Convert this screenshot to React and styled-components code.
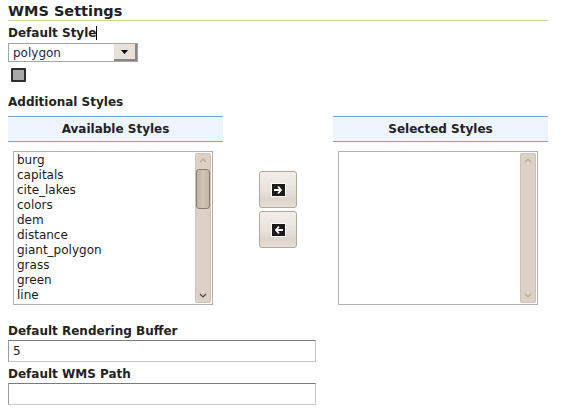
import styled, { createGlobalStyle } from "styled-components";

const GlobalStyle = createGlobalStyle`
  body {
    margin: 0;
    background: #fff;
    font-family: "DejaVu Sans", Verdana, sans-serif;
    color: #222;
  }
`;

const StyledPage = styled.div`
  width: 540px;
  padding: 2px 0 0 8px;
`;

const StyledTitle = styled.h2`
  margin: 0;
  font-size: 14.5px;
  font-weight: bold;
  line-height: 18px;
  border-bottom: 1px solid #bddc8a;
`;

const StyledLabel = styled.div`
  font-size: 12px;
  font-weight: bold;
  line-height: 15px;
  margin-top: ${(props) => props.$top || 0}px;
`;

const StyledCaret = styled.span`
  display: inline-block;
  width: 1px;
  height: 14px;
  background: #000;
  vertical-align: -3px;
`;

const StyledSelect = styled.div`
  margin-top: 2px;
  width: 128px;
  height: 17px;
  border: 1px solid #a5a5a5;
  display: flex;
  align-items: center;
  font-size: 12px;
  color: #1c2a4a;
  background: #fff;
`;

const StyledSelectText = styled.span`
  flex: 1;
  padding-left: 4px;
`;

const StyledSelectButton = styled.span`
  width: 23px;
  height: 17px;
  background: #e8e1da;
  border-right: 2px solid #8a8683;
  border-bottom: 2px solid #8a8683;
  box-sizing: border-box;
  display: flex;
  align-items: center;
  justify-content: center;
`;

const StyledSwatch = styled.div`
  margin: 6px 0 0 3px;
  width: 11px;
  height: 10px;
  background: #a9a9a9;
  border: 2px solid #2e2e2e;
  border-radius: 1px;
`;

const StyledColumns = styled.div`
  margin-top: 6px;
  display: grid;
  grid-template-columns: 215px 1fr 215px;
`;

const StyledColumn = styled.div`
  display: flex;
  flex-direction: column;
`;

const StyledHeader = styled.div`
  height: 24px;
  background: #edf4fd;
  border-top: 1px solid #7da3d3;
  border-bottom: 1px solid #7da3d3;
  font-size: 12px;
  font-weight: bold;
  display: flex;
  align-items: center;
  justify-content: center;
`;

const StyledListBox = styled.div`
  margin: 9px 0 0 5px;
  width: 198px;
  height: 152px;
  border: 1px solid #b0b0b0;
  display: flex;
  background: #fff;
`;

const StyledItems = styled.ul`
  flex: 1;
  margin: 0;
  padding: 1px 0 0 3px;
  list-style: none;
  font-size: 12px;
  line-height: 15px;
  overflow: hidden;
  color: #1a1a1a;
`;

const StyledScrollbar = styled.div`
  width: 16px;
  margin: 1px 1px 1px 0;
  padding: 4px 0;
  box-sizing: border-box;
  background: #ddd1c6;
  border: 1px solid #cfc3b7;
  border-radius: 2px;
  display: flex;
  flex-direction: column;
  align-items: center;
  gap: 5px;
`;

const StyledSpacer = styled.div`
  flex: 1;
`;

const StyledThumb = styled.div`
  width: 12px;
  height: 38px;
  margin-top: 1px;
  border: 1px solid #8e7d6d;
  border-radius: 3px;
  background: linear-gradient(90deg, #c3b4a5, #d0c2b4 50%, #c3b4a5);
`;

const StyledButtons = styled.div`
  display: flex;
  flex-direction: column;
  align-items: center;
  gap: 3px;
  padding-top: 55px;
`;

const StyledMoveButton = styled.button`
  width: 38px;
  height: 37px;
  padding: 0;
  border: 1px solid #b4a698;
  border-radius: 3px;
  background: linear-gradient(#f2eeea, #e9e3dd 50%, #ddd4cb 80%, #e6dfd8);
  display: flex;
  align-items: center;
  justify-content: center;
`;

const StyledInput = styled.div`
  margin-top: 1px;
  width: 298px;
  height: 18px;
  padding: 1px 4px;
  border: 1px solid #c9c9c9;
  border-top-color: #7a7a7a;
  border-left-color: #9a9a9a;
  font-size: 12px;
  line-height: 19px;
  color: #222;
`;

const availableStyles = [
  "burg",
  "capitals",
  "cite_lakes",
  "colors",
  "dem",
  "distance",
  "giant_polygon",
  "grass",
  "green",
  "line",
];

function ArrowIcon({ left }) {
  return (
    <svg width="15" height="14" viewBox="0 0 15 14">
      <rect x="0" y="0" width="15" height="14" fill="#fff" />
      <rect x="1" y="1" width="13" height="12" fill="#1b1b1b" />
      <g transform={left ? "translate(15,0) scale(-1,1)" : undefined}>
        <path d="M3 7h6" stroke="#fff" strokeWidth="2" />
        <path d="M7 3.5l3 3.5-3 3.5" stroke="#fff" strokeWidth="1.8" fill="none" />
      </g>
    </svg>
  );
}

function Chevron({ down, color }) {
  return (
    <svg width="8" height="5" viewBox="0 0 8 5">
      <path
        d={down ? "M1 1l3 3 3-3" : "M1 4l3-3 3 3"}
        stroke={color}
        strokeWidth="1.2"
        fill="none"
      />
    </svg>
  );
}

function ListBox({ items, active }) {
  return (
    <StyledListBox>
      <StyledItems>
        {items.map((item) => (
          <li key={item}>{item}</li>
        ))}
      </StyledItems>
      <StyledScrollbar>
        <Chevron color="#b8ab9e" />
        {active && <StyledThumb />}
        <StyledSpacer />
        <Chevron down color={active ? "#4a4440" : "#b8ab9e"} />
      </StyledScrollbar>
    </StyledListBox>
  );
}

export default function App() {
  return (
    <>
      <GlobalStyle />
      <StyledPage>
        <StyledTitle>WMS Settings</StyledTitle>
        <StyledLabel $top={5}>
          Default Style
          <StyledCaret />
        </StyledLabel>
        <StyledSelect>
          <StyledSelectText>polygon</StyledSelectText>
          <StyledSelectButton>
            <svg width="7" height="4" viewBox="0 0 7 4">
              <path d="M0 0h7L3.5 4z" fill="#000" />
            </svg>
          </StyledSelectButton>
        </StyledSelect>
        <StyledSwatch />
        <StyledLabel $top={13}>Additional Styles</StyledLabel>
        <StyledColumns>
          <StyledColumn>
            <StyledHeader>Available Styles</StyledHeader>
            <ListBox items={availableStyles} active />
          </StyledColumn>
          <StyledButtons>
            <StyledMoveButton>
              <ArrowIcon />
            </StyledMoveButton>
            <StyledMoveButton>
              <ArrowIcon left />
            </StyledMoveButton>
          </StyledButtons>
          <StyledColumn>
            <StyledHeader>Selected Styles</StyledHeader>
            <ListBox items={[]} />
          </StyledColumn>
        </StyledColumns>
        <StyledLabel $top={19}>Default Rendering Buffer</StyledLabel>
        <StyledInput>5</StyledInput>
        <StyledLabel $top={5}>Default WMS Path</StyledLabel>
        <StyledInput />
      </StyledPage>
    </>
  );
}
